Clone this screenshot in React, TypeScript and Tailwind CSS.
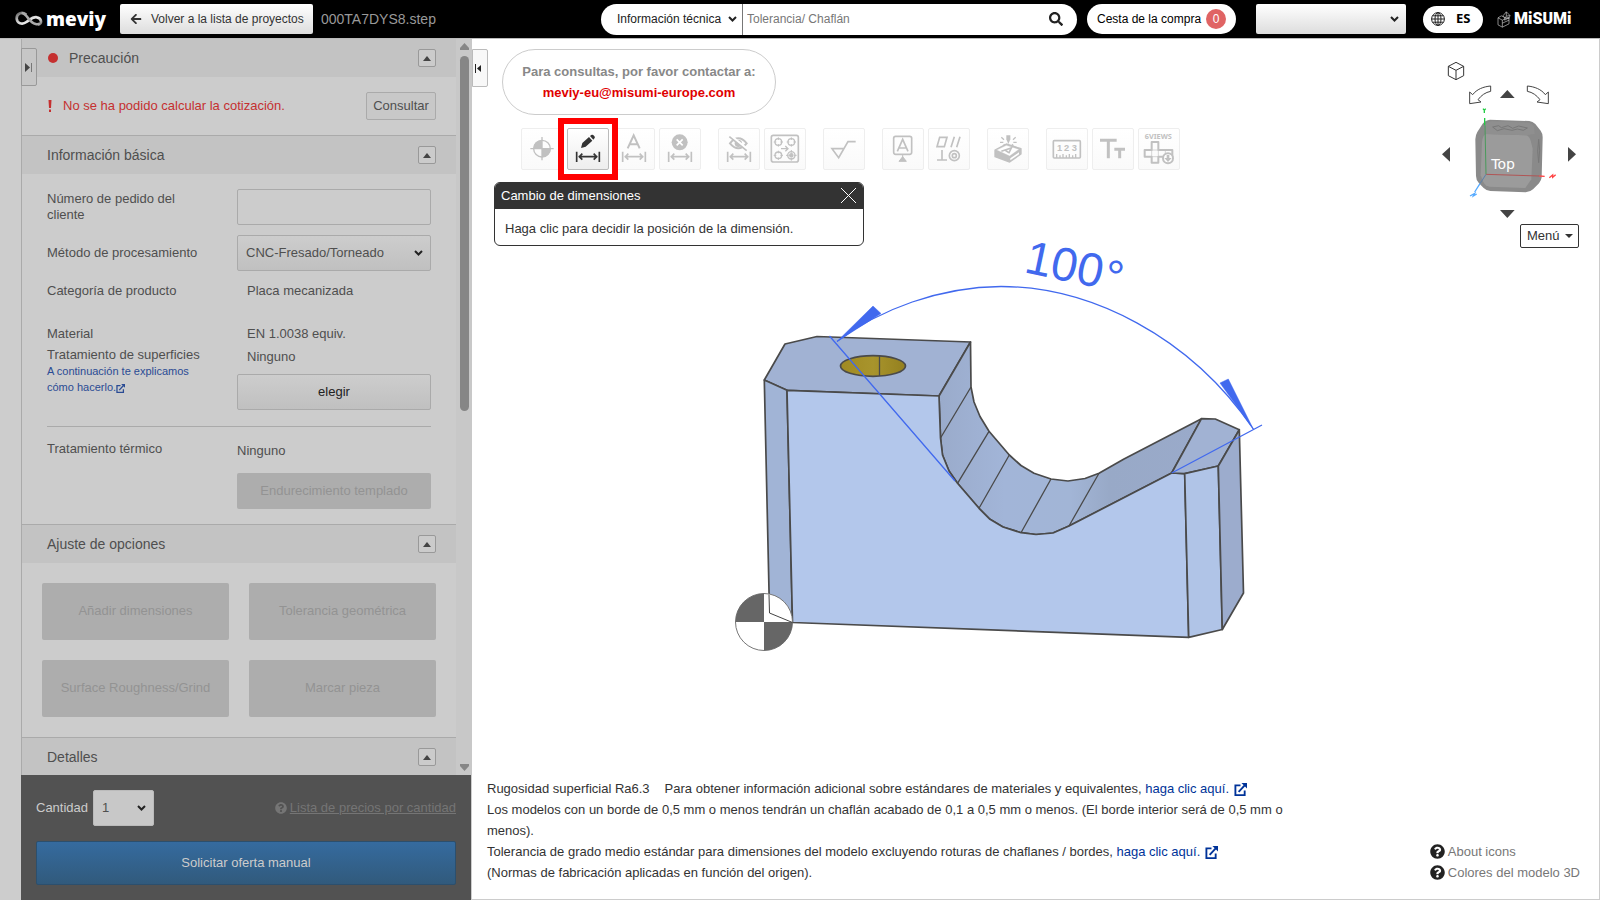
import React, { useState } from 'react';
import { FaArrowLeft, FaSearch, FaQuestionCircle } from 'react-icons/fa';

const ExternalIcon: React.FC<{ className?: string }> = ({ className }) => (
  <svg viewBox="0 0 14 14" className={className} fill="none" stroke="currentColor" strokeWidth="2" aria-hidden="true">
    <path d="M7 2.5H1.5v10.5H11.5V8" />
    <path d="M5 9.5L12 2" />
    <path d="M8 0H14V6Z" fill="currentColor" stroke="none" />
  </svg>
);

interface SelectProps {
  id?: string;
  label?: string;
  wrapper: string;
  className: string;
  chevron: string;
  value: string;
}

const Select: React.FC<SelectProps> = ({ id, label, wrapper, className, chevron, value }) => (
  <div className={`relative ${wrapper}`}>
    <select id={id} aria-label={label} className={`h-full w-full appearance-none ${className}`}>
      <option>{value}</option>
    </select>
    <svg viewBox="0 0 9 6" className={`pointer-events-none absolute top-1/2 h-[6px] w-[9px] -translate-y-1/2 ${chevron}`} fill="none" stroke="#222" strokeWidth="2" aria-hidden="true">
      <path d="M1 1l3.500 3.500L8 1" />
    </svg>
  </div>
);

const Header: React.FC = () => (
  <header className="flex h-[39px] shrink-0 items-center border-b border-[#bbb] bg-black pl-[15px] pr-7 text-xs">
    <a href="#inicio" className="flex w-[105px] items-center gap-[3px] text-white" aria-label="meviy">
      <svg viewBox="0 0 84 48" className="h-4 w-7 shrink-0" fill="none" aria-hidden="true">
        <defs>
          <linearGradient id="loop" x1="0" x2="1" y1="0" y2="1">
            <stop offset="0" stopColor="#666" />
            <stop offset=".35" stopColor="#c9c9c9" />
            <stop offset=".65" stopColor="#eee" />
            <stop offset="1" stopColor="#777" />
          </linearGradient>
        </defs>
        <path d="M34 11C22 1 5 6 5 22c0 15 17 20 29 11 12-8 20-17 32-14 15 3 16 21 3 22" stroke="url(#loop)" strokeWidth="8" />
        <path d="M20 6c18 2 20 28 42 33 4 1 8 1 12-1" stroke="#aaa" strokeWidth="8" />
      </svg>
      <span className="font-['Open_Sans',sans-serif] text-[19px]/7 font-extrabold">meviy</span>
    </a>
    <button className="flex h-[30px] w-[193px] items-center gap-[9px] rounded-xs bg-linear-to-b from-white to-[#ddd] pl-[10px] text-[#333]">
      <FaArrowLeft className="size-3" />
      Volver a la lista de proyectos
    </button>
    <span className="ml-2 text-sm text-[#999]">000TA7DYS8.step</span>

    <div className="ml-auto flex items-center">
      <form className="flex h-[31px] w-[476px] items-center overflow-hidden rounded-full bg-white" onSubmit={(e) => e.preventDefault()}>
        <Select label="Tipo de búsqueda" wrapper="h-full w-[142px]" className="border-r border-[#777] pl-4 text-[#222]" chevron="right-[6px]" value="Información técnica" />
        <input aria-label="Buscar" placeholder="Tolerancia/ Chaflán" className="h-full min-w-0 flex-1 px-1 outline-none placeholder:text-[#777]" />
        <button aria-label="Buscar" className="mr-[14px] text-[#222]">
          <FaSearch className="size-[14px]" />
        </button>
      </form>
      <button className="ml-[10px] flex h-[30px] w-[149px] items-center justify-between rounded-full bg-white px-[10px] text-black">
        Cesta de la compra
        <span className="size-5 rounded-full bg-[#e06464] text-xs/5 text-white">0</span>
      </button>
      <Select label="Cuenta" wrapper="ml-5 h-[30px] w-[150px]" className="rounded-xs bg-linear-to-b from-white to-[#ddd]" chevron="right-[7px]" value="" />
      <button className="ml-[17px] flex h-[27px] w-[60px] items-center gap-[11px] rounded-full bg-white pl-2 font-['Noto_Sans',sans-serif] text-[13px] font-bold text-black">
        <svg viewBox="0 0 14 14" className="size-[14px]" fill="none" stroke="#222" aria-hidden="true">
          <circle cx="7" cy="7" r="6.4" />
          <ellipse cx="7" cy="7" rx="3" ry="6.4" />
          <path d="M7 .6v12.8M.6 7h12.8M1.6 3.8h10.8M1.6 10.2h10.8" />
        </svg>
        ES
      </button>
      <a href="#misumi" className="ml-[14px] flex w-[75px] items-center gap-[3px] text-white">
        <svg viewBox="0 0 42 50" className="h-[17px] w-[14px] shrink-0" fill="none" stroke="#ccc" strokeWidth="2" aria-hidden="true">
          <path d="M3 20l10-6 10 5v8l13-7v18L16 48 3 41zM3 20l13 7v21M16 27l20-9M18 14l10-12 11 11-3 9-13-3zM28 2v13l11-2M28 15l-5 6M16 36l20-9" />
        </svg>
        <span className="font-[Roboto,sans-serif] text-base/6 font-black">MiSUMi</span>
      </a>
    </div>
  </header>
);

interface SectionProps {
  title: string;
  alert?: boolean;
  first?: boolean;
  children?: React.ReactNode;
}

const Section: React.FC<SectionProps> = ({ title, alert, first, children }) => {
  const [open, setOpen] = useState(true);
  return (
    <section className={first ? '' : 'border-t border-[#aaa]'}>
      <div className="flex h-[38px] items-center bg-[#c3c3c3] pl-[25px] pr-5">
        {alert && <span className="ml-px mr-[11px] size-[10px] rounded-full bg-[#c53030]" />}
        <h2 className="flex-1 text-sm text-[#4f4f4f]">{title}</h2>
        <button
          aria-label={title}
          aria-expanded={open}
          onClick={() => setOpen(!open)}
          className="flex size-[18px] items-center justify-center rounded-xs border border-[#999] bg-[#cbcbcb]"
        >
          <svg viewBox="0 0 8 5" className="h-[5px] w-2" fill="#444" aria-hidden="true">
            <path d="M0 5L4 0l4 5z" />
          </svg>
        </button>
      </div>
      {open && children}
    </section>
  );
};

const boxStyle = 'h-9 w-full rounded-xs border border-[#aaa]';
const options = ['Añadir dimensiones', 'Tolerancia geométrica', 'Surface Roughness/Grind', 'Marcar pieza'];

const Sidebar: React.FC = () => (
  <aside className="relative flex w-[472px] shrink-0 flex-col bg-[#cdcdcd] pl-[21px] text-[13px]/4 text-[#4f4f4f]">
    <button aria-label="Plegar panel" className="absolute left-[21px] top-[9px] z-10 flex h-[38px] w-4 items-center justify-center rounded-r-xs border border-[#999] bg-[#c6c6c6]">
      <svg viewBox="0 0 8 9" className="h-[9px] w-2" aria-hidden="true">
        <path d="M0 0l5 4.500L0 9z" fill="#444" />
        <path d="M6.500 0v9" stroke="#777" />
      </svg>
    </button>
    <div className="flex min-h-0 flex-1 border-l border-[#aaa]">
      <div className="flex-1 overflow-hidden bg-[#ccc]">
        <Section title="Precaución" alert first>
          <div className="flex h-[58px] items-center pl-[26px] pr-5 text-[#c53030]">
            <svg viewBox="0 0 4 12" className="h-3 w-1" fill="currentColor" aria-hidden="true">
              <path d="M.5 0h3L3 8H1zM1 9.500h2V12H1z" />
            </svg>
            <span className="ml-[11px] flex-1">No se ha podido calcular la cotización.</span>
            <button className="h-7 w-[70px] rounded-xs border border-[#aaa] bg-[#c8c8c8] text-[#4f4f4f]">Consultar</button>
          </div>
        </Section>

        <Section title="Información básica">
          <div className="px-[25px] py-[15px]">
            <div className="grid grid-cols-[190px_1fr] items-center gap-y-[10px]">
              <label htmlFor="pedido" className="w-36">Número de pedido del cliente</label>
              <input id="pedido" className={boxStyle} />
              <label htmlFor="metodo">Método de procesamiento</label>
              <Select
                id="metodo"
                wrapper="h-9"
                className="rounded-xs border border-[#aaa] bg-linear-to-b from-[#cdcdcd] to-[#c0c0c0] pl-2"
                chevron="right-2"
                value="CNC-Fresado/Torneado"
              />
            </div>
            <dl>
              <div className="mt-3 grid grid-cols-[200px_1fr]">
                <dt>Categoría de producto</dt>
                <dd>Placa mecanizada</dd>
              </div>
              <div className="mt-[27px] grid grid-cols-[200px_1fr]">
                <dt>Material</dt>
                <dd>EN 1.0038 equiv.</dd>
              </div>
              <div className="mt-[5px] grid grid-cols-[190px_1fr]">
                <dt>
                  Tratamiento de superficies
                  <a href="#ayuda" className="block w-[150px] text-[11px]/4 text-[#2a4b94]">
                    A continuación te explicamos cómo hacerlo.
                    <ExternalIcon className="inline size-[9px]" />
                  </a>
                </dt>
                <dd className="pt-0.5">
                  <span className="pl-[10px]">Ninguno</span>
                  <button className={`${boxStyle} mt-[9px] bg-linear-to-b from-[#cdcdcd] to-[#c0c0c0] text-[#222]`}>elegir</button>
                </dd>
              </div>
              <hr className="mt-4 border-[#aaa]" />
              <div className="mt-[14px] grid grid-cols-[190px_1fr]">
                <dt>Tratamiento térmico</dt>
                <dd className="pt-0.5">
                  Ninguno
                  <button disabled className="mt-[14px] h-9 w-full rounded-xs bg-[#adadad] text-[#939393]">
                    Endurecimiento templado
                  </button>
                </dd>
              </div>
            </dl>
          </div>
        </Section>

        <Section title="Ajuste de opciones">
          <div className="grid grid-cols-2 gap-5 p-5">
            {options.map((o) => (
              <button key={o} disabled className="h-[57px] rounded-xs bg-[#adadad] pb-0.5 text-[#939393]">{o}</button>
            ))}
          </div>
        </Section>

        <Section title="Detalles" />
      </div>

      <div className="flex w-4 flex-col items-center bg-[#c8c8c8] pb-1 pt-1" aria-hidden="true">
        <svg viewBox="0 0 9 7" className="h-[7px] w-[9px]" fill="#868686"><path d="M4.500 0L9 5v2H0V5z" /></svg>
        <div className="mt-[6px] h-[355px] w-[9px] rounded-full bg-[#868686]" />
        <svg viewBox="0 0 9 7" className="mt-auto h-[7px] w-[9px]" fill="#868686"><path d="M4.500 7L9 2V0H0v2z" /></svg>
      </div>
    </div>

    <div className="mr-px bg-[#525252] px-[15px] py-[15px] text-[#ccc]">
      <div className="flex items-center">
        <label htmlFor="cantidad" className="mr-[5px]">Cantidad</label>
        <Select
          id="cantidad"
          wrapper="h-9 w-[61px]"
          className="rounded-xs border border-[#bbb] bg-[#c8c8c8] pl-2 text-[#4f4f4f]"
          chevron="right-2"
          value="1"
        />
        <a href="#precios" className="ml-auto flex items-center gap-[3px] text-[#757575]">
          <FaQuestionCircle className="size-3" />
          <span className="underline">Lista de precios por cantidad</span>
        </a>
      </div>
      <button className="mt-[15px] h-11 w-full rounded-xs border border-[#2c4f6d] bg-linear-to-b from-[#356b9f] to-[#315a7c] text-[#ccc]">
        Solicitar oferta manual
      </button>
    </div>
  </aside>
);

// dimension symbol shared by several tool icons
const DimBar = () => (
  <path d="M29 71v31M97 71v31M35 86h56M46 77l-9 9 9 9M80 77l9 9-9 9" fill="none" stroke="currentColor" strokeWidth="5" />
);

const icons: Record<string, React.ReactNode> = {
  origin: (
    <>
      <circle cx="63" cy="62" r="25" fill="none" stroke="currentColor" strokeWidth="4" />
      <path d="M63 62V36A26 26 0 0 0 37 62zM63 62v26A26 26 0 0 0 89 62z" />
      <path d="M63 27v70M28 62h70" stroke="currentColor" strokeWidth="4" />
    </>
  ),
  edit: (
    <>
      <path d="M42 60l4-15 20-18 10 11-20 18zM69 24l4-3c3-1 5-1 8 2s3 5 2 7l-4 5z" />
      <DimBar />
    </>
  ),
  text: (
    <>
      <path d="M44 61L62 22l18 39M50 49h24" fill="none" stroke="currentColor" strokeWidth="6" />
      <DimBar />
    </>
  ),
  remove: (
    <>
      <circle cx="62" cy="43" r="24" />
      <path d="M53 34l18 18M71 34L53 52" stroke="#fff" strokeWidth="5" />
      <DimBar />
    </>
  ),
  hide: (
    <>
      <path d="M36 46q25-30 50 0q-25 30-50 0z" fill="none" stroke="currentColor" strokeWidth="6" />
      <circle cx="61" cy="46" r="11" />
      <path d="M36 22l52 42" stroke="#fff" strokeWidth="8" />
      <path d="M34 26l52 42" stroke="currentColor" strokeWidth="5" />
      <DimBar />
    </>
  ),
  holes: (
    <g fill="none" stroke="currentColor" strokeWidth="4">
      <rect x="22" y="22" width="81" height="80" rx="6" strokeWidth="5" />
      <circle cx="43" cy="42" r="10" />
      <circle cx="82" cy="42" r="10" />
      <circle cx="43" cy="82" r="10" />
      <circle cx="82" cy="82" r="11" />
      <circle cx="82" cy="82" r="5" fill="currentColor" />
      <path d="M43 28v8M43 48v8M29 42h8M49 42h8M82 28v8M82 48v8M68 42h8M88 42h8M43 68v8M43 88v8M29 82h8M49 82h8M82 66v8M82 90v8M66 82h8M90 82h8" strokeWidth="3" />
      <path d="M51 62h20M64 54l8 8-8 8" />
    </g>
  ),
  roughness: <path d="M64 62H27l20 27L75 41h23" fill="none" stroke="currentColor" strokeWidth="5" />,
  datum: (
    <>
      <rect x="35" y="25" width="54" height="54" rx="6" fill="none" stroke="currentColor" strokeWidth="5" />
      <path d="M46 70l16-36 16 36M51 60h22" fill="none" stroke="currentColor" strokeWidth="5" />
      <path d="M62 79v12M62 86l11 14H51z" stroke="currentColor" strokeWidth="3" />
    </>
  ),
  geometric: (
    <g fill="none" stroke="currentColor" strokeWidth="5">
      <path d="M27 56l8-28h22l-8 28zM69 58l10-32M86 58l10-32M27 96h30M42 66v30" />
      <circle cx="79" cy="83" r="15" />
      <circle cx="79" cy="83" r="6" />
    </g>
  ),
  marking: (
    <g stroke="currentColor">
      <path d="M24 66l34-18 44 14v16l-34 24-44-16z" strokeLinejoin="round" strokeWidth="4" />
      <path d="M29 66l29-14 38 12-28 20z" fill="#fff" strokeWidth="1" />
      <path d="M70 91l26-18v6L70 97z" fill="#fff" stroke="none" />
      <path d="M43 70l30-10-8 16M54 66l10 7" fill="none" strokeWidth="5" />
      <path d="M58 22h12v12l-6 14-6-14z" stroke="none" />
      <path d="M43 28l8 7M86 28l-8 7M39 43h10M79 43h10M49 53l4-4M75 49l4 4" strokeWidth="4" />
    </g>
  ),
  ruler: (
    <>
      <rect x="22" y="38" width="81" height="52" rx="3" fill="none" stroke="currentColor" strokeWidth="5" />
      <path d="M32 90V78M42 90V82M51 90V78M61 90V82M70 90V78M80 90V82M89 90V78" stroke="currentColor" strokeWidth="4" />
      <text x="33" y="69" fontSize="28" fontWeight="bold">1</text>
      <text x="54" y="69" fontSize="28" fontWeight="bold">2</text>
      <text x="77" y="69" fontSize="28" fontWeight="bold">3</text>
    </>
  ),
  fontSize: <path d="M24 37h50M49 37v54M67 64h32M83 64v27" fill="none" stroke="currentColor" strokeWidth="9" />,
  views: (
    <>
      <text x="61" y="33" fontSize="22" fontWeight="bold" textAnchor="middle" className="font-['Noto_Sans',sans-serif]">6VIEWS</text>
      <path d="M41 42h20v24h42v20H61v18H41V86H20V66h21z" fill="none" stroke="currentColor" strokeWidth="6" strokeLinejoin="round" />
      <path d="M41 66h20v20H41zM82 66v20" fill="none" stroke="currentColor" strokeWidth="2" />
      <circle cx="90" cy="91" r="15" fill="#fff" stroke="currentColor" strokeWidth="6" />
      <path d="M86 81h8v9h7L90 102 79 90h7z" />
    </>
  ),
};

const toolGroups = [
  [
    { id: 'origin', label: 'Origen' },
    { id: 'edit', label: 'Cambio de dimensiones' },
    { id: 'text', label: 'Texto de dimensión' },
    { id: 'remove', label: 'Eliminar dimensión' },
  ],
  [
    { id: 'hide', label: 'Ocultar dimensiones' },
    { id: 'holes', label: 'Agujeros' },
  ],
  [{ id: 'roughness', label: 'Rugosidad' }],
  [
    { id: 'datum', label: 'Referencia' },
    { id: 'geometric', label: 'Tolerancia geométrica' },
  ],
  [{ id: 'marking', label: 'Marcar pieza' }],
  [
    { id: 'ruler', label: 'Medir' },
    { id: 'fontSize', label: 'Tamaño de texto' },
    { id: 'views', label: '6 vistas' },
  ],
];

const Toolbar: React.FC = () => (
  <div className="ml-[49px] mt-[13px] flex gap-[17px]">
    {toolGroups.map((group, i) => (
      <div key={i} className="flex gap-1">
        {group.map(({ id, label }) => {
          const active = id === 'edit';
          return (
            <div key={id} className="relative">
              <button
                aria-label={label}
                disabled={!active}
                className={`block size-[42px] rounded-xs border ${
                  active ? 'border-[#bbb] bg-linear-to-b from-white to-[#eee] text-[#333]' : 'border-[#eee] bg-linear-to-b from-white to-[#fafafa] text-[#c1c1c1]'
                }`}
              >
                <svg viewBox="3 3 120 120" className="size-10" fill="currentColor" aria-hidden="true">{icons[id]}</svg>
              </button>
              {active && <span className="pointer-events-none absolute -left-[9px] -top-[10px] z-10 h-[62px] w-[60px] border-6 border-[#f00]" />}
            </div>
          );
        })}
      </div>
    ))}
  </div>
);

const Model: React.FC = () => (
  <svg viewBox="472 39 1127 860" className="absolute inset-0 h-full w-full" aria-label="Modelo 3D" role="img">
    <defs>
      <linearGradient id="slope" x1="0" x2="1">
        <stop offset="0" stopColor="#9aabcb" />
        <stop offset=".25" stopColor="#a2b5d8" />
        <stop offset=".5" stopColor="#a2b5d6" />
        <stop offset=".65" stopColor="#98a9c7" />
        <stop offset="1" stopColor="#9aaaca" />
      </linearGradient>
      <linearGradient id="hole" x1="0" x2="1">
        <stop offset="0" stopColor="#a08a22" />
        <stop offset=".5" stopColor="#a8942c" />
        <stop offset="1" stopColor="#94801f" />
      </linearGradient>
    </defs>
    <g stroke="#4a4a4a" strokeWidth="1.700" strokeLinejoin="round">
      <path d="M764.300 380L785 344L817 336.500L970.500 342L939 396L787 390.300Z" fill="#a1b2d3" />
      <path d="M764.300 380L787 390.300L792.500 622.500L769.500 613Z" fill="#a1b4d6" />
      <path
        d="M939 396L970.500 342L971 387L974 402L980 416.500L989 431.300L1009.300 455L1021 465.500L1034 473.300L1051 479L1068 481L1085 478.500L1099 473.300L1124 459L1201.500 418.700L1171.700 473L1069 526L1053 533L1036 534.500L1021 532.700L1003 527L990 519.300L979 508.300L957.500 483.300L949 471L942.500 455L940.500 438Z"
        fill="url(#slope)"
      />
      <path
        d="M787 390.300L939 396L940.500 438L942.500 455L949 471L957.500 483.300L979 508.300L990 519.300L1003 527L1021 532.700L1036 534.500L1053 533L1069 526L1171.700 473L1184.700 473.700L1188.700 637.300L792.500 622.500Z"
        fill="#b3c7eb"
      />
      <path d="M1171.700 473L1201.500 418.700L1215.300 419L1239.300 429.700L1218.300 466L1184.700 473.700Z" fill="#a1b2d3" />
      <path d="M1184.700 473.700L1218.300 466L1222.300 629.500L1188.700 637.300Z" fill="#b0c4e7" />
      <path d="M1218.300 466L1239.300 429.700L1243.500 593L1222.300 629.500Z" fill="#9caccd" />
      <path d="M940.500 438L971 387M957.500 483.300L989 431.300M979 508.300L1009.300 455M1021 532.700L1051 479M1069 526L1099 473.300" fill="none" strokeWidth="1.300" />
      <ellipse cx="873" cy="366" rx="32.500" ry="10.300" fill="url(#hole)" />
      <path d="M879.500 356v20" strokeWidth="1.300" />
    </g>
    <circle cx="764" cy="622" r="28.500" fill="#fff" stroke="#777" />
    <path d="M764 622V593.500A28.500 28.500 0 0 0 735.500 622ZM764 622V650.500A28.500 28.500 0 0 0 792.500 622Z" fill="#666" />
    <path d="M769 594.500L769.500 613L792.500 622.500" fill="none" stroke="#444" />
    <g fill="none" stroke="#4169ee" strokeWidth="1.300">
      <path d="M829.500 336L955 481M1171.700 473L1262 425" />
      <path d="M837 341.500C880 309 940 287 1001 286.500C1090 286.500 1190 336 1253.300 429" />
      <path d="M837 341.500L873 306L881 313.500ZM1253.300 429L1220 383L1228.300 379Z" fill="#4169ee" strokeWidth="0.500" />
    </g>
    <text transform="translate(1023 272) rotate(12)" fontSize="47" fill="#4169ee">
      100<tspan dx="2" dy="2">°</tspan>
    </text>
  </svg>
);

const ViewCube: React.FC = () => (
  <svg viewBox="-3 -3 600 510" className="h-[170px] w-[200px]" aria-label="Orientación de la vista" role="img">
    <path d="M145 49l23-12 23 12v28l-23 12-23-12zM145 49l23 12 23-12M168 61v28" fill="none" stroke="#333" strokeWidth="3" />
    <g fill="#fff" stroke="#444" strokeWidth="3">
      <path d="M272 108c-22 2-42 10-54 26l-9-8v35l34-5-9-7c10-13 22-22 38-25z" />
      <path d="M382 108c22 2 42 10 54 26l9-8v35l-34-5 9-7c-10-13-22-22-38-25z" />
    </g>
    <path d="M322 120l22 24h-44zM322 504l22-24h-44zM126 313l24-22v44zM528 313l-24-22v44z" fill="#444" />
    <path d="M270 209l118 4q10 1 18 9l16 20q6 8 6 20l-3 120q-1 10-8 18l-18 18q-8 8-22 9l-106-4q-12-1-20-9l-14-14q-9-9-9-22l-2-110q0-12 6-22l16-25q8-11 22-12z" fill="#8a8a8a" />
    <path d="M258 252l120 4q10 2 14 16l6 24-4 92-18 26-108-4q-12-2-18-14l-8-20 4-100q2-20 12-24z" fill="#9b9b9b" />
    <path d="M276 214l110 4q10 2 16 12l2 22-26 4-120-4-8-20q8-16 26-18z" fill="#8f8f8f" />
    <path d="M278 231l18-4 8 6 20-6 14 8 18-7 26 6-12 7-18-4-16 4-24-5-20 6z" fill="none" stroke="#787878" strokeWidth="3" />
    <path d="M416 268q6 30 0 70-6-34 0-70z" fill="none" stroke="#787878" strokeWidth="3" />
    <path d="M254 204v22" stroke="#22cc44" strokeWidth="4" />
    <path d="M255 226l3 147" stroke="#4a9a5c" strokeWidth="3" />
    <path d="M258 373l160 5" stroke="#b05555" strokeWidth="3" />
    <path d="M418 378l16 1M448 383l10-8 0 7 9-8" fill="none" stroke="#ff4444" strokeWidth="4" />
    <path d="M258 373l-18 28" stroke="#5a80aa" strokeWidth="3" />
    <path d="M240 401l-16 25M210 438l14-8 -4 8 10-6" fill="none" stroke="#55aaff" strokeWidth="4" />
    <path d="M249 176l4 5 4-5M253 181v8" fill="none" stroke="#22cc44" strokeWidth="4" />
    <text x="274" y="356" fontSize="42" fill="#fff" className="font-['DejaVu_Sans',sans-serif]">Top</text>
  </svg>
);

const Viewer: React.FC = () => {
  const [showHelp, setShowHelp] = useState(true);
  return (
    <main className="relative flex min-w-0 flex-1 flex-col border-b border-r border-[#ccc] bg-white text-[13px]/[21px] text-[#333]">
      <Model />
      <button aria-label="Mostrar panel" className="absolute left-0 top-[10px] z-10 flex h-[38px] w-4 items-center justify-center rounded-r-xs border border-[#bbb] bg-[#f8f8f8] pr-1">
        <svg viewBox="0 0 8 9" className="h-[9px] w-2 shrink-0" aria-hidden="true">
          <path d="M7 1L3 4.500 7 8z" fill="#222" />
          <path d="M1.500 0v9" stroke="#222" />
        </svg>
      </button>

      <div className="relative flex justify-between pt-[10px]">
        <div>
          <div className="ml-[30px] flex h-[66px] w-[274px] flex-col items-center justify-center rounded-full border border-[#ccc] font-bold">
            <span className="text-[#888]">Para consultas, por favor contactar a:</span>
            <a href="mailto:meviy-eu@misumi-europe.com" className="text-[#e00000]">meviy-eu@misumi-europe.com</a>
          </div>
          <Toolbar />
          {showHelp && (
            <div className="ml-[22px] mt-3 w-[370px] overflow-hidden rounded-md border border-[#333] bg-white">
              <div className="flex h-[26px] items-center justify-between bg-[#333] pb-0.5 pl-[6px] pr-[7px] text-white">
                <h3>Cambio de dimensiones</h3>
                <button aria-label="Cerrar" onClick={() => setShowHelp(false)}>
                  <svg viewBox="0 0 15 15" className="size-[15px]" stroke="#fff" aria-hidden="true">
                    <path d="M0 0l15 15M15 0L0 15" />
                  </svg>
                </button>
              </div>
              <p className="px-[10px] pb-[6px] pt-[9px]">Haga clic para decidir la posición de la dimensión.</p>
            </div>
          )}
        </div>

        <div className="flex flex-col items-end">
          <ViewCube />
          <button className="mr-5 mt-[5px] flex h-6 w-[59px] items-center justify-between rounded-xs border border-[#333] bg-white pb-px pl-[6px] pr-[5px]">
            Menú
            <svg viewBox="0 0 8 4" className="h-1 w-2" fill="#333" aria-hidden="true"><path d="M0 0h8L4 4z" /></svg>
          </button>
        </div>
      </div>

      <footer className="relative mt-auto flex items-end justify-between pb-4 pl-[15px] pr-[19px]">
        <div className="w-[805px]">
          <p>
            Rugosidad superficial Ra6.3<span className="ml-[15px]">Para obtener información adicional sobre estándares de materiales y equivalentes,</span>{' '}
            <a href="#materiales" className="text-[#003399]">haga clic aquí. <ExternalIcon className="ml-px inline size-[13px]" /></a>
          </p>
          <p>Los modelos con un borde de 0,5 mm o menos tendrán un chaflán acabado de 0,1 a 0,5 mm o menos. (El borde interior será de 0,5 mm o menos).</p>
          <p>
            Tolerancia de grado medio estándar para dimensiones del modelo excluyendo roturas de chaflanes / bordes,{' '}
            <a href="#tolerancias" className="text-[#003399]">haga clic aquí. <ExternalIcon className="ml-px inline size-[13px]" /></a>
          </p>
          <p>(Normas de fabricación aplicadas en función del origen).</p>
        </div>
        <nav className="text-[#777]">
          <a href="#iconos" className="flex items-center gap-[3px]">
            <FaQuestionCircle className="size-[15px] text-[#222]" />
            About icons
          </a>
          <a href="#colores" className="flex items-center gap-[3px]">
            <FaQuestionCircle className="size-[15px] text-[#222]" />
            Colores del modelo 3D
          </a>
        </nav>
      </footer>
    </main>
  );
};

const App: React.FC = () => (
  <div className="flex h-screen flex-col overflow-hidden font-['Liberation_Sans',Arial,sans-serif]">
    <Header />
    <div className="flex min-h-0 flex-1">
      <Sidebar />
      <Viewer />
    </div>
  </div>
);

export default App;
